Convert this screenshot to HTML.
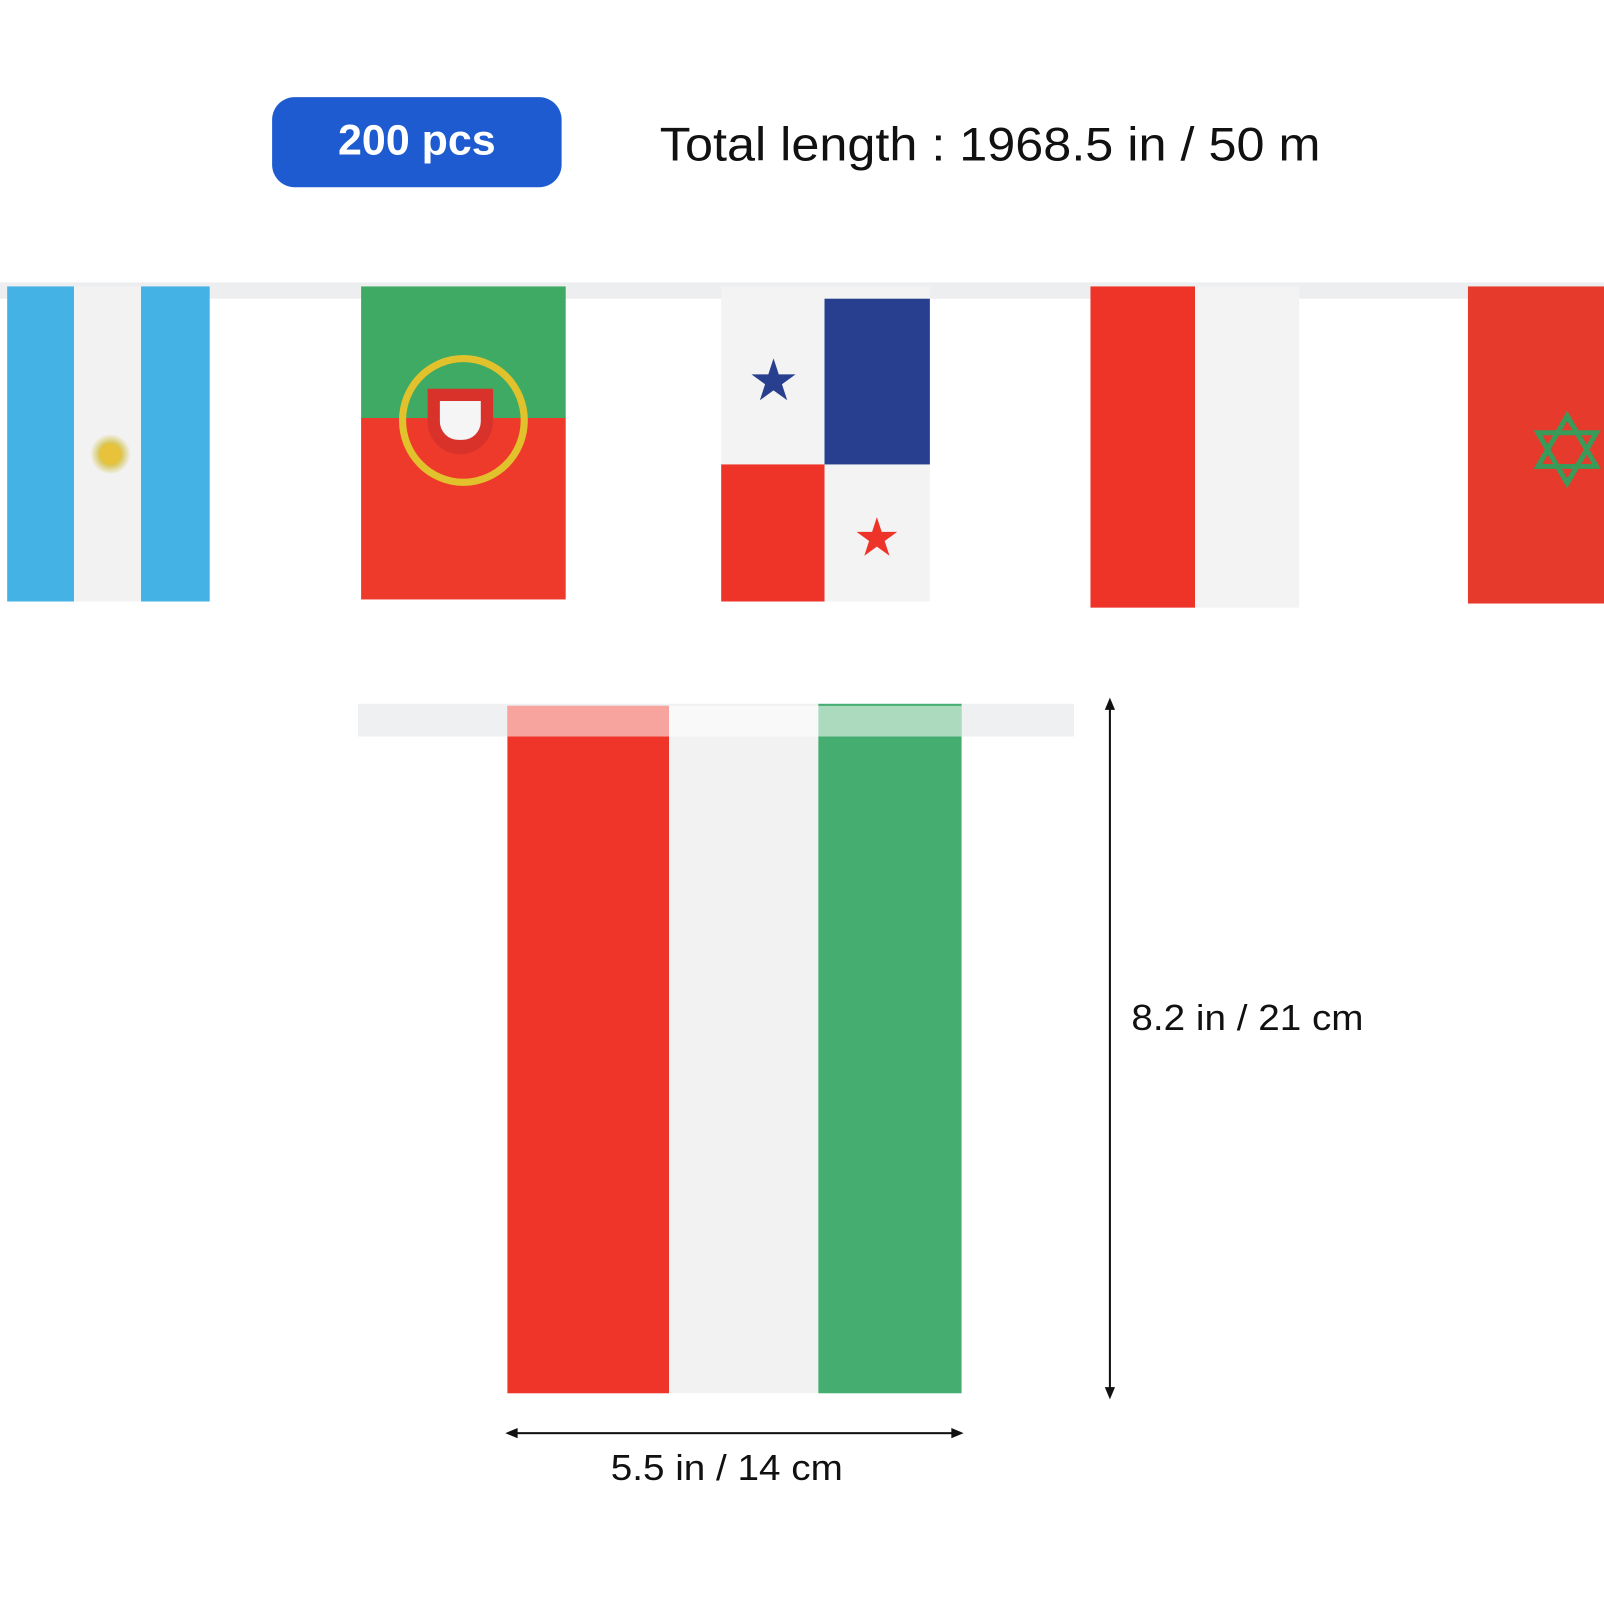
<!DOCTYPE html><html><head><style>
html,body{margin:0;padding:0;background:#fff;width:1604px;height:1604px;overflow:hidden}
#w{position:absolute;left:0;top:0;width:1568px;height:1568px;transform:scale(1.02296);transform-origin:0 0;font-family:"Liberation Sans",sans-serif}
.a{position:absolute}
.s{transform-origin:0 0}
</style></head><body><div id="w">
<div class="a" style="left:266px;top:95px;width:283px;height:88px;background:#1e5bd0;border-radius:22px;color:#fff;font-weight:bold;font-size:42px;line-height:84px;text-align:center">200 pcs</div>
<div class="a s" style="left:645px;top:114px;font-size:46px;color:#111;white-space:nowrap;transform:scaleX(1.07)">Total length : 1968.5 in / 50 m</div>
<div class="a" style="left:0;top:276px;width:1568px;height:16px;background:#eceef0"></div>
<div class="a" style="left:7px;top:280px;width:198px;height:308px;background:linear-gradient(90deg,#45b2e6 0 33%,#f2f2f2 33% 66%,#45b2e6 66%)"></div>
<div class="a" style="left:88px;top:424px;width:40px;height:40px;border-radius:50%;background:radial-gradient(#e7c23a 35%,#d8c860 40%,transparent 70%)"></div>
<div class="a" style="left:353px;top:280px;width:200px;height:306px;background:linear-gradient(180deg,#3eaa63 0 42%,#ee3a2a 42%)"></div>
<div class="a" style="left:390px;top:347px;width:126px;height:128px;border-radius:50%;border:7px solid #e2c22c;box-sizing:border-box"></div>
<div class="a" style="left:418px;top:380px;width:64px;height:64px;background:#d8322a;border-radius:0 0 32px 32px"></div>
<div class="a" style="left:430px;top:392px;width:40px;height:38px;background:#f5f5f5;border-radius:0 0 18px 18px"></div>
<div class="a" style="left:705px;top:280px;width:204px;height:308px;background:#f3f3f3"></div>
<div class="a" style="left:806px;top:292px;width:103px;height:162px;background:#273f8e"></div>
<div class="a" style="left:705px;top:454px;width:101px;height:134px;background:#ee3328"></div>
<div class="a" style="left:731px;top:344px;font-size:56px;color:#273f8e;line-height:56px">★</div>
<div class="a" style="left:834px;top:500px;font-size:52px;color:#ee3328;line-height:52px">★</div>
<div class="a" style="left:1066px;top:280px;width:204px;height:314px;background:linear-gradient(90deg,#ee3328 0 50%,#f3f3f3 50%)"></div>
<div class="a" style="left:1435px;top:280px;width:133px;height:310px;background:#e63a2c"></div>
<div class="a" style="left:1490px;top:392px;font-size:100px;color:#3a9a5a;line-height:100px">✡</div>
<div class="a" style="left:350px;top:688px;width:700px;height:32px;background:#eef0f1"></div>
<div class="a" style="left:496px;top:690px;width:158px;height:672px;background:#ef3529"></div>
<div class="a" style="left:654px;top:690px;width:148px;height:672px;background:#f2f2f2"></div>
<div class="a" style="left:800px;top:688px;width:140px;height:674px;background:#45ad6f"></div>
<div class="a" style="left:496px;top:690px;width:444px;height:30px;background:rgba(255,255,255,0.55)"></div>
<div class="a" style="left:1084px;top:690px;width:2px;height:670px;background:#111"></div>
<div class="a" style="left:1080px;top:682px;border:5px solid transparent;border-bottom:12px solid #111;border-top:0"></div>
<div class="a" style="left:1080px;top:1356px;border:5px solid transparent;border-top:12px solid #111;border-bottom:0"></div>
<div class="a s" style="left:1106px;top:976px;font-size:35px;color:#111;white-space:nowrap;transform:scaleX(1.08)">8.2 in / 21 cm</div>
<div class="a" style="left:500px;top:1400px;width:436px;height:2px;background:#111"></div>
<div class="a" style="left:494px;top:1396px;border:5px solid transparent;border-right:12px solid #111;border-left:0"></div>
<div class="a" style="left:930px;top:1396px;border:5px solid transparent;border-left:12px solid #111;border-right:0"></div>
<div class="a s" style="left:597px;top:1416px;font-size:35px;color:#111;white-space:nowrap;transform:scaleX(1.08)">5.5 in / 14 cm</div>
</div></body></html>
